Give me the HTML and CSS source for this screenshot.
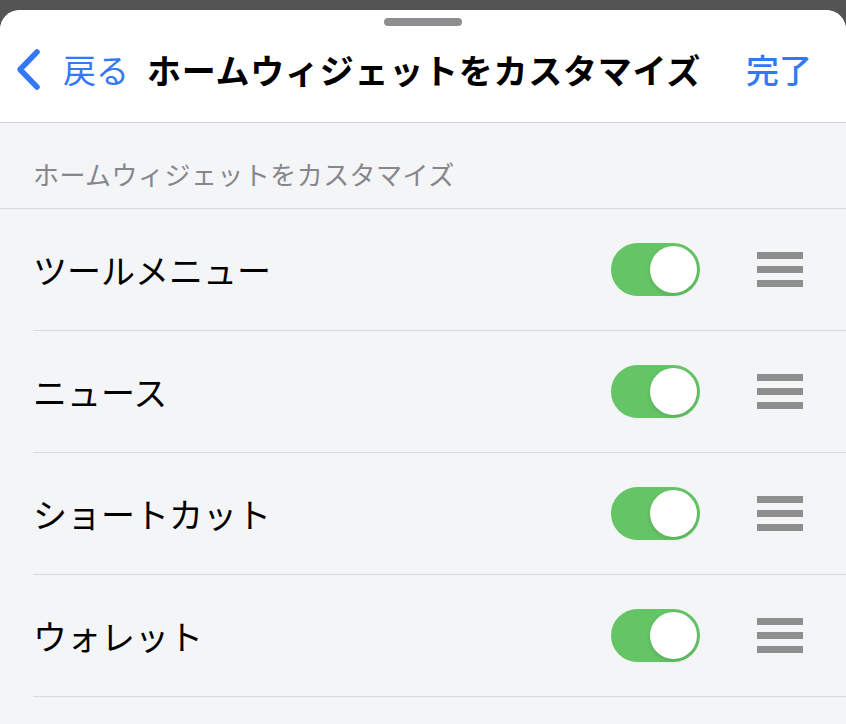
FILE: index.html
```html
<!DOCTYPE html>
<html lang="ja">
<head>
  <meta charset="UTF-8">
  <title>ホームウィジェットをカスタマイズ</title>
  <link rel="stylesheet" href="styles.css">
</head>
<body>

<div class="sheet">
  <div class="nav">
    <div class="grabber"></div>
    <div class="nav-row">
      <a class="back" href="#">
        <svg class="chevron" width="27" height="43" viewBox="0 0 27 43">
          <path d="M22 4 L5 21.5 L22 39" fill="none" stroke="#3478f6" stroke-width="5.5" stroke-linecap="round" stroke-linejoin="round"/>
        </svg>
        <span>戻る</span>
      </a>
      <h1 class="title">ホームウィジェットをカスタマイズ</h1>
      <a class="done" href="#">完了</a>
    </div>
  </div>

  <div class="section-header">ホームウィジェットをカスタマイズ</div>

  <ul class="list">
    <li class="row">
      <span class="label">ツールメニュー</span>
      <span class="toggle on"><span class="knob"></span></span>
      <span class="handle"><i></i><i></i><i></i></span>
    </li>
    <li class="row">
      <span class="label">ニュース</span>
      <span class="toggle on"><span class="knob"></span></span>
      <span class="handle"><i></i><i></i><i></i></span>
    </li>
    <li class="row">
      <span class="label">ショートカット</span>
      <span class="toggle on"><span class="knob"></span></span>
      <span class="handle"><i></i><i></i><i></i></span>
    </li>
    <li class="row">
      <span class="label">ウォレット</span>
      <span class="toggle on"><span class="knob"></span></span>
      <span class="handle"><i></i><i></i><i></i></span>
    </li>
  </ul>
</div>

</body>
</html>
```

FILE: styles.css
```css
html, body {
  height: 100%;
}
body {
  margin: 0;
  background: #545454;
  font-family: "Noto Sans CJK JP", "Noto Sans", sans-serif;
  overflow: hidden;
}
.sheet {
  margin-top: 10px;
  height: calc(100% - 10px);
  background: #f4f5f7;
  border-radius: 20px 20px 0 0;
  overflow: hidden;
}
.nav {
  background: white;
  height: 113px;
  border-bottom: 1px solid #d4d4d8;
  box-sizing: border-box;
  padding-top: 8px;
}
.grabber {
  width: 78px;
  height: 8px;
  border-radius: 4px;
  background: #8e8e90;
  margin: 0 auto;
}
.nav-row {
  display: flex;
  align-items: center;
  height: 86px;
  padding: 0 34px 0 15px;
}
.back {
  display: flex;
  align-items: center;
  color: #3478f6;
  text-decoration: none;
  font-size: 33px;
}
.chevron {
  margin-right: 21px;
}
.title {
  flex: 1;
  margin: 0 0 0 18px;
  font-size: 34px;
  font-weight: bold;
  color: black;
  letter-spacing: 0.75px;
  white-space: nowrap;
}
.done {
  color: #3478f6;
  text-decoration: none;
  font-size: 33px;
  font-weight: 500;
}
.section-header {
  height: 86px;
  box-sizing: border-box;
  padding: 32px 0 0 33px;
  font-size: 26px;
  color: #86868b;
  border-bottom: 1px solid #d9d9dd;
  letter-spacing: 0.45px;
}
.list {
  list-style: none;
  margin: 0 0 0 33px;
  padding: 0;
}
.row {
  display: flex;
  align-items: center;
  height: 121px;
  border-bottom: 1px solid #d9d9dd;
  padding-right: 43px;
}
.label {
  flex: 1;
  font-size: 34px;
  color: black;
}
.toggle {
  width: 89px;
  height: 53px;
  border-radius: 27px;
  background: #e5e5ea;
  position: relative;
  margin-right: 57px;
}
.toggle.on {
  background: #65c466;
}
.knob {
  position: absolute;
  top: 3px;
  left: 3px;
  width: 47px;
  height: 47px;
  border-radius: 50%;
  background: white;
  box-shadow: 0 2px 4px rgba(0,0,0,0.12);
}
.toggle.on .knob {
  left: 39px;
}
.handle {
  display: flex;
  flex-direction: column;
  gap: 7px;
  width: 46px;
}
.handle i {
  display: block;
  height: 7px;
  background: #8e8e8e;
}
```
